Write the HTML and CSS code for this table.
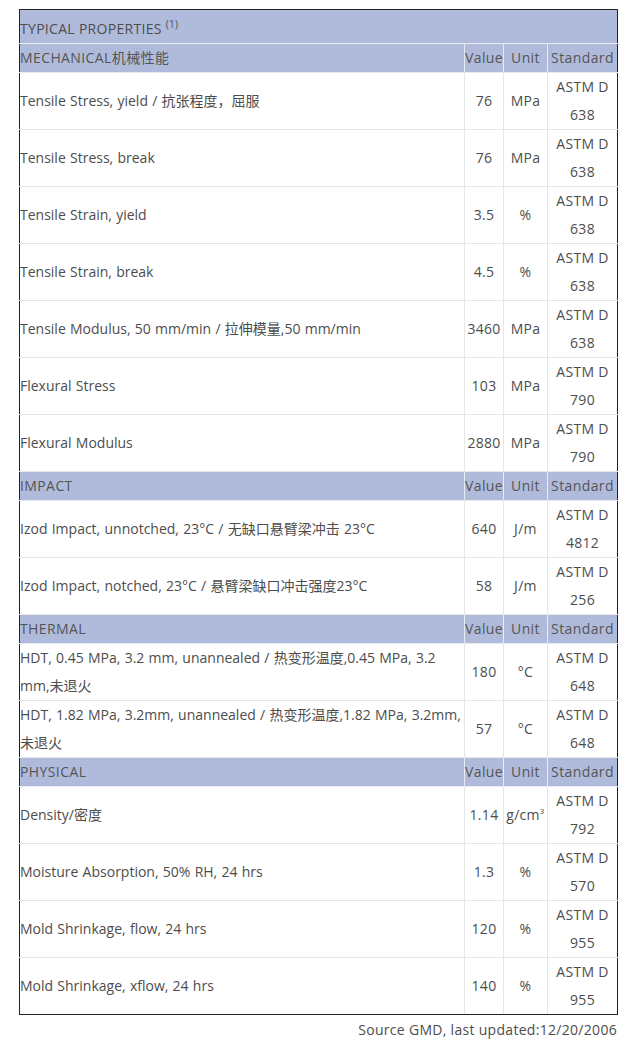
FILE: index.html
```html
<!DOCTYPE html>
<html lang="en">
<head>
<meta charset="utf-8">
<title>Typical Properties</title>
<link rel="stylesheet" href="styles.css">
</head>
<body>
<div class="wrap">
<table class="props">
<colgroup>
<col class="c-name"><col class="c-val"><col class="c-unit"><col class="c-std">
</colgroup>
<tr class="top"><td colspan="4">TYPICAL PROPERTIES <sup>(1)</sup></td></tr>

<tr class="sec"><td class="name">MECHANICAL机械性能</td><td>Value</td><td>Unit</td><td>Standard</td></tr>
<tr><td class="name">Tensile Stress, yield / 抗张程度，屈服</td><td>76</td><td>MPa</td><td>ASTM D 638</td></tr>
<tr><td class="name">Tensile Stress, break</td><td>76</td><td>MPa</td><td>ASTM D 638</td></tr>
<tr><td class="name">Tensile Strain, yield</td><td>3.5</td><td>%</td><td>ASTM D 638</td></tr>
<tr><td class="name">Tensile Strain, break</td><td>4.5</td><td>%</td><td>ASTM D 638</td></tr>
<tr><td class="name">Tensile Modulus, 50 mm/min / 拉伸模量,50 mm/min</td><td>3460</td><td>MPa</td><td>ASTM D 638</td></tr>
<tr><td class="name">Flexural Stress</td><td>103</td><td>MPa</td><td>ASTM D 790</td></tr>
<tr><td class="name">Flexural Modulus</td><td>2880</td><td>MPa</td><td>ASTM D 790</td></tr>

<tr class="sec"><td class="name">IMPACT</td><td>Value</td><td>Unit</td><td>Standard</td></tr>
<tr><td class="name">Izod Impact, unnotched, 23°C / 无缺口悬臂梁冲击 23°C</td><td>640</td><td>J/m</td><td>ASTM D 4812</td></tr>
<tr><td class="name">Izod Impact, notched, 23°C / 悬臂梁缺口冲击强度23°C</td><td>58</td><td>J/m</td><td>ASTM D 256</td></tr>

<tr class="sec"><td class="name">THERMAL</td><td>Value</td><td>Unit</td><td>Standard</td></tr>
<tr><td class="name">HDT, 0.45 MPa, 3.2 mm, unannealed / 热变形温度,0.45 MPa, 3.2 mm,未退火</td><td>180</td><td>°C</td><td>ASTM D 648</td></tr>
<tr><td class="name">HDT, 1.82 MPa, 3.2mm, unannealed / 热变形温度,1.82 MPa, 3.2mm,未退火</td><td>57</td><td>°C</td><td>ASTM D 648</td></tr>

<tr class="sec"><td class="name">PHYSICAL</td><td>Value</td><td>Unit</td><td>Standard</td></tr>
<tr><td class="name">Density/密度</td><td>1.14</td><td>g/cm<sup class="pow">3</sup></td><td>ASTM D 792</td></tr>
<tr><td class="name">Moisture Absorption, 50% RH, 24 hrs</td><td>1.3</td><td>%</td><td>ASTM D 570</td></tr>
<tr><td class="name">Mold Shrinkage, flow, 24 hrs</td><td>120</td><td>%</td><td>ASTM D 955</td></tr>
<tr><td class="name">Mold Shrinkage, xflow, 24 hrs</td><td>140</td><td>%</td><td>ASTM D 955</td></tr>
</table>
<p class="source">Source GMD, last updated:12/20/2006</p>
</div>
</body>
</html>
```

FILE: styles.css
```css
html, body {
  margin: 0;
  padding: 0;
  background: #ffffff;
}
body {
  font-family: "Open Sans", "Noto Sans CJK SC", sans-serif;
  font-size: 14px;
  letter-spacing: 0.3px;
  color: #4d4d4d;
}
.wrap {
  padding: 9px 6px 0 19px;
}
.props {
  width: 598px;
  table-layout: fixed;
  border-collapse: collapse;
  border: 1px solid #222;
}
.c-name { width: 445px; }
.c-val { width: 39px; }
.c-unit { width: 44px; }
.c-std { width: 70px; }
.props td {
  padding: 0;
  border: 1px solid #e6e6e6;
  text-align: center;
  vertical-align: middle;
  line-height: 28px;
  height: 56px;
}
.props td.name {
  text-align: left;
  letter-spacing: 0;
  word-spacing: 0.6px;
}
.props tr.top td {
  background: #b0bbdb;
  text-align: left;
  height: 28px;
  padding-top: 5px;
  line-height: 28px;
  border-top: 1px solid #222;
  border-bottom: 1px solid #e8ebf4;
}
.props tr.sec td {
  background: #b0bbdb;
  height: 28px;
  line-height: 28px;
  border-color: #e8ebf4;
  color: #555;
  letter-spacing: 0.4px;
}
.props tr td:first-child { border-left: 1px solid #222; }
.props tr td:last-child { border-right: 1px solid #222; }
.props tr:last-child td { border-bottom: 1px solid #222; }
sup {
  font-size: 10px;
  line-height: 0;
  vertical-align: 6px;
}
sup.pow {
  font-size: 8px;
}
.source {
  margin: 4px 0 0 0;
  text-align: right;
  width: 598px;
  line-height: 22px;
}
```
